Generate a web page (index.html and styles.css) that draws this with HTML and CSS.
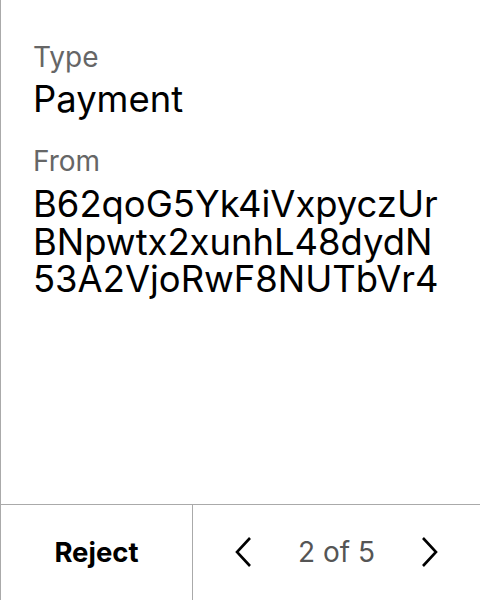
FILE: index.html
```html
<!DOCTYPE html>
<html>
<head>
<meta charset="utf-8">
<link rel="stylesheet" href="styles.css">
</head>
<body>
<div class="panel">
  <div class="content">
    <div class="field">
      <div class="label">Type</div>
      <div class="value">Payment</div>
    </div>
    <div class="field">
      <div class="label">From</div>
      <div class="value address">B62qoG5Yk4iVxpyczUrBNpwtx2xunhL48dydN53A2VjoRwF8NUTbVr4</div>
    </div>
  </div>
  <div class="footer">
    <button class="reject">Reject</button>
    <div class="pager">
      <svg class="chev" viewBox="0 0 20 32" width="20" height="32"><path d="M17 2 L4 16 L17 30" fill="none" stroke="#000" stroke-width="2.6"/></svg>
      <span class="count">2 of 5</span>
      <svg class="chev" viewBox="0 0 20 32" width="20" height="32"><path d="M3 2 L16 16 L3 30" fill="none" stroke="#000" stroke-width="2.6"/></svg>
    </div>
  </div>
</div>
</body>
</html>
```
FILE: styles.css
```css
* { box-sizing: border-box; }
html, body { margin: 0; padding: 0; background: #fff; }
body { font-family: Inter, "Noto Sans", sans-serif; color: #000; }
.panel {
  width: 480px;
  height: 600px;
  border-left: 1px solid #aaa;
  display: flex;
  flex-direction: column;
}
.content {
  flex: 1;
  padding: 40px 30px 0 32px;
}
.field { margin-bottom: 26px; }
.label { font-size: 28px; color: #666; line-height: 34px; }
.value { font-size: 36.4px; line-height: 37px; margin-top: 7px; }
.address { word-break: break-all; line-height: 37.5px; margin-top: 8px; }
.footer {
  height: 96px;
  border-top: 1px solid #aaa;
  display: flex;
}
.reject {
  width: 192px;
  border: none;
  border-right: 1px solid #aaa;
  background: none;
  font-family: Inter, sans-serif;
  font-size: 27.5px;
  font-weight: 700;
  color: #000;
  padding: 0 0 2px 0;
}
.pager {
  flex: 1;
  display: flex;
  align-items: center;
  justify-content: space-between;
  padding: 0 40px 2px 40px;
}
.count { font-size: 28px; color: #555; }
```
